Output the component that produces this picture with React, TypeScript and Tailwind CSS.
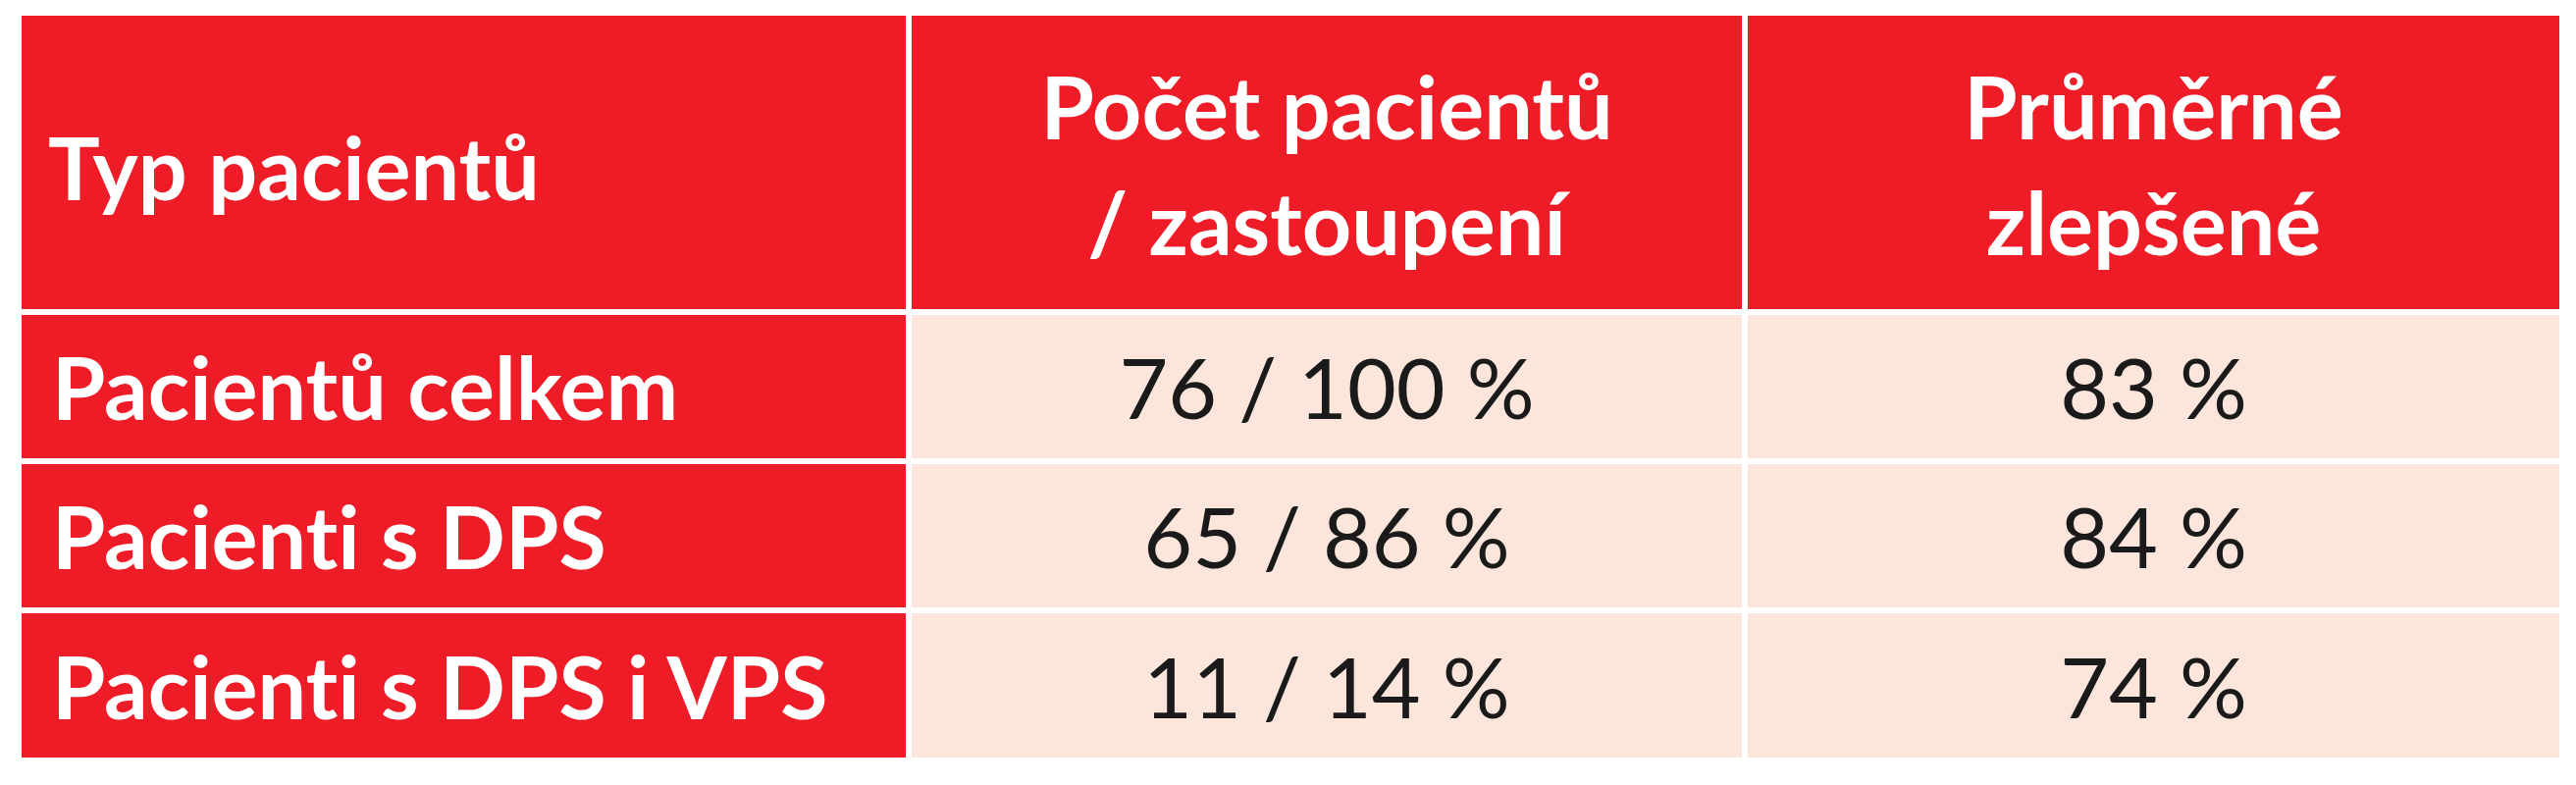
import React from "react";

const rows = [
  ["Pacientů celkem", "76 / 100 %", "83 %"],
  ["Pacienti s DPS", "65 / 86 %", "84 %"],
  ["Pacienti s DPS i VPS", "11 / 14 %", "74 %"],
];

export default function App() {
  return (
    <div
      className="w-[2625px] h-[800px] bg-white pl-[22px] pt-[16px] [font-variant-ligatures:none]"
      style={{ fontFamily: "Lato, 'Open Sans', sans-serif" }}
    >
      <div className="grid grid-cols-[901px_846px_827px] grid-rows-[299px_146px_146px_147px] gap-[6px]">
        <div className="bg-[#ee1c27] flex items-center pl-[27px] pt-[8px] text-white font-bold text-[88px] leading-[118px]">
          Typ pacientů
        </div>
        <div className="bg-[#ee1c27] flex flex-col items-center justify-center pt-[2px] text-white font-bold text-[88px] leading-[118px]">
          <span>Počet pacientů</span>
          <span>/ zastoupení</span>
        </div>
        <div className="bg-[#ee1c27] flex flex-col items-center justify-center pt-[2px] text-white font-bold text-[88px] leading-[118px]">
          <span>Průměrné</span>
          <span>zlepšené</span>
        </div>
        {rows.map((r) => (
          <React.Fragment key={r[0]}>
            <div className="bg-[#ee1c27] flex items-center pl-[31px] text-white font-bold text-[88px] leading-none">
              {r[0]}
            </div>
            <div className="bg-[#fce5db] flex items-center justify-center text-[#1a1a1a] text-[86px] leading-none">
              {r[1]}
            </div>
            <div className="bg-[#fce5db] flex items-center justify-center text-[#1a1a1a] text-[86px] leading-none">
              {r[2]}
            </div>
          </React.Fragment>
        ))}
      </div>
    </div>
  );
}
